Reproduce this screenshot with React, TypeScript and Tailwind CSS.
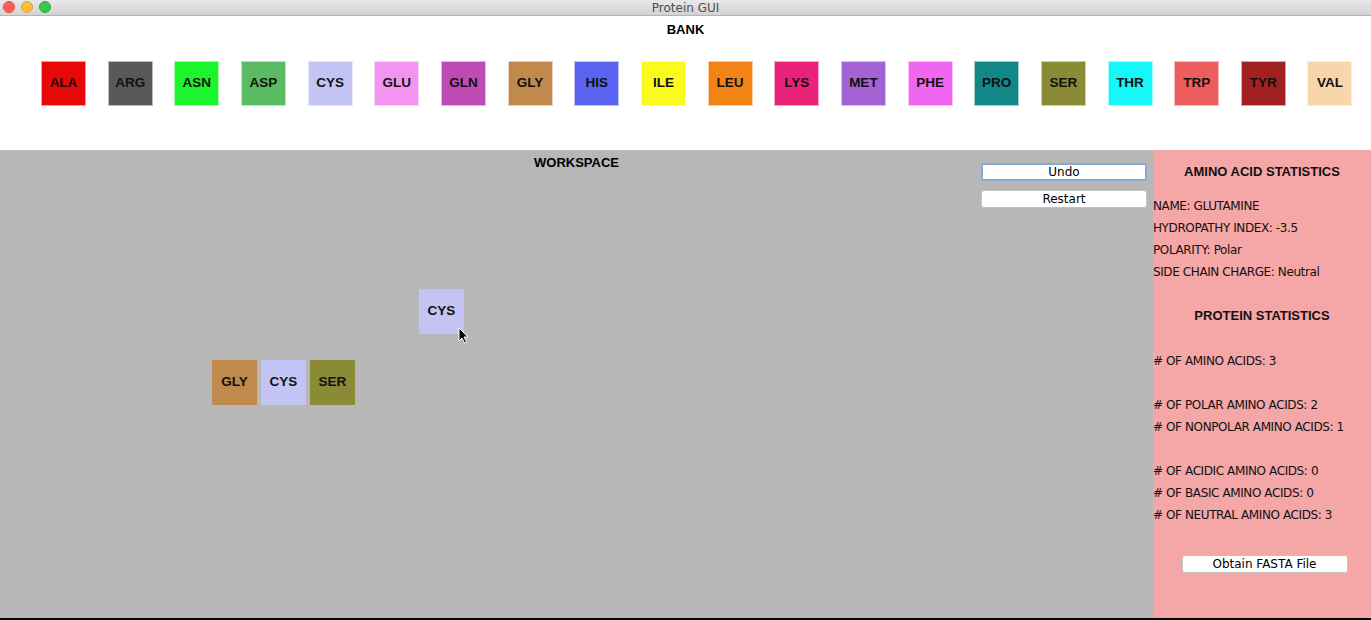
const BANK: [string, string][] = [
  ["ALA", "bg-[#e80808]"],
  ["ARG", "bg-[#595959]"],
  ["ASN", "bg-[#1cf52c]"],
  ["ASP", "bg-[#5abb62]"],
  ["CYS", "bg-[#c4c4f4]"],
  ["GLU", "bg-[#f494f2]"],
  ["GLN", "bg-[#bd4bb1]"],
  ["GLY", "bg-[#c08a4c]"],
  ["HIS", "bg-[#5a62f0]"],
  ["ILE", "bg-[#fafa1c]"],
  ["LEU", "bg-[#f28314]"],
  ["LYS", "bg-[#e92178]"],
  ["MET", "bg-[#a462d4]"],
  ["PHE", "bg-[#f066f0]"],
  ["PRO", "bg-[#118886]"],
  ["SER", "bg-[#8b8a37]"],
  ["THR", "bg-[#18f7f7]"],
  ["TRP", "bg-[#ee5d5d]"],
  ["TYR", "bg-[#a32020]"],
  ["VAL", "bg-[#f8d6a9]"],
];

const Tile = ({ name, color, className = "" }: { name: string; color: string; className?: string }) => (
  <div
    className={`w-[45px] h-[45px] shrink-0 flex items-center justify-center border border-white/60 text-[13.5px] font-bold text-[#111] ${color} ${className}`}
  >
    {name}
  </div>
);

const MacButton = ({ label, focused = false, className = "" }: { label: string; focused?: boolean; className?: string }) => (
  <button
    className={`h-[18px] bg-white rounded-[3px] text-[12px] leading-none text-black font-['DejaVu_Sans',sans-serif] ${
      focused ? "border-2 border-[#86a9dc]" : "border border-[#c2c2c2]"
    } ${className}`}
  >
    {label}
  </button>
);

export default function App() {
  return (
    <div className="w-[1371px] h-[620px] overflow-hidden flex flex-col font-['Liberation_Sans',Arial,sans-serif] bg-black">
      {/* title bar */}
      <div className="h-[16px] shrink-0 relative flex items-center justify-center bg-gradient-to-b from-[#e8e8e8] to-[#d3d3d3] border-b border-[#b3b3b3]">
        <div className="absolute left-[3px] top-[1px] flex gap-[6px]">
          <span className="w-[12px] h-[12px] rounded-full bg-[#fc605c] border border-[#de4a46]" />
          <span className="w-[12px] h-[12px] rounded-full bg-[#fdbc40] border border-[#dea236]" />
          <span className="w-[12px] h-[12px] rounded-full bg-[#34c84a] border border-[#27aa35]" />
        </div>
        <span className="text-[12px] leading-none text-[#4d4d4d] font-['DejaVu_Sans',sans-serif]">Protein GUI</span>
      </div>

      {/* bank */}
      <div className="h-[134px] shrink-0 bg-white flex flex-col">
        <div className="pt-[6px] text-center text-[13px] font-bold text-black leading-[16px]">BANK</div>
        <div className="flex pl-[41px] gap-[21.67px] mt-[23px]">
          {BANK.map(([n, c]) => (
            <Tile key={n} name={n} color={c} />
          ))}
        </div>
      </div>

      {/* bottom area */}
      <div className="h-[468px] shrink-0 flex">
        {/* workspace */}
        <div className="w-[1153px] bg-[#b7b7b7] relative flex items-start">
          <div className="w-[172px]" />
          <div className="flex-1 pt-[5px] text-center text-[13px] font-bold text-black leading-[16px]">WORKSPACE</div>
          <div className="w-[172px] pt-[13px] pr-[6px] flex flex-col gap-[9px]">
            <MacButton label="Undo" focused />
            <MacButton label="Restart" />
          </div>

          <Tile name="CYS" color="bg-[#c4c4f4]" className="absolute left-[419px] top-[139px] border-none" />
          <svg className="absolute left-[458px] top-[177px]" width="11" height="17" viewBox="0 0 11 17">
            <path d="M1 1 L1 14 L4 11 L6.5 16 L8.5 15 L6 10 L10 10 Z" fill="black" stroke="white" strokeWidth="1" />
          </svg>

          <div className="absolute left-[212px] top-[210px] flex gap-[4px]">
            <Tile name="GLY" color="bg-[#c08a4c]" className="border-none" />
            <Tile name="CYS" color="bg-[#c4c4f4]" className="border-none" />
            <Tile name="SER" color="bg-[#8b8a37]" className="border-none" />
          </div>
        </div>

        {/* stats */}
        <div className="flex-1 bg-[#f5a6a6] flex flex-col text-[12px] text-[#111] font-['DejaVu_Sans',sans-serif]">
          <div className="pt-[14px] pb-[15px] text-center text-[13px] font-bold leading-[16px] font-['Liberation_Sans',Arial,sans-serif]">
            AMINO ACID STATISTICS
          </div>
          <div className="flex flex-col leading-[22px] tracking-[-0.4px]">
            <div>NAME: GLUTAMINE</div>
            <div>HYDROPATHY INDEX: -3.5</div>
            <div>POLARITY: Polar</div>
            <div>SIDE CHAIN CHARGE: Neutral</div>
          </div>
          <div className="pt-[25px] pb-[26px] text-center text-[13px] font-bold leading-[16px] font-['Liberation_Sans',Arial,sans-serif]">
            PROTEIN STATISTICS
          </div>
          <div className="flex flex-col leading-[22px] tracking-[-0.4px]">
            <div># OF AMINO ACIDS: 3</div>
            <div className="h-[22px]" />
            <div># OF POLAR AMINO ACIDS: 2</div>
            <div># OF NONPOLAR AMINO ACIDS: 1</div>
            <div className="h-[22px]" />
            <div># OF ACIDIC AMINO ACIDS: 0</div>
            <div># OF BASIC AMINO ACIDS: 0</div>
            <div># OF NEUTRAL AMINO ACIDS: 3</div>
          </div>
          <div className="flex justify-center pt-[29px] pl-[5px]">
            <MacButton label="Obtain FASTA File" className="w-[166px]" />
          </div>
        </div>
      </div>
    </div>
  );
}
